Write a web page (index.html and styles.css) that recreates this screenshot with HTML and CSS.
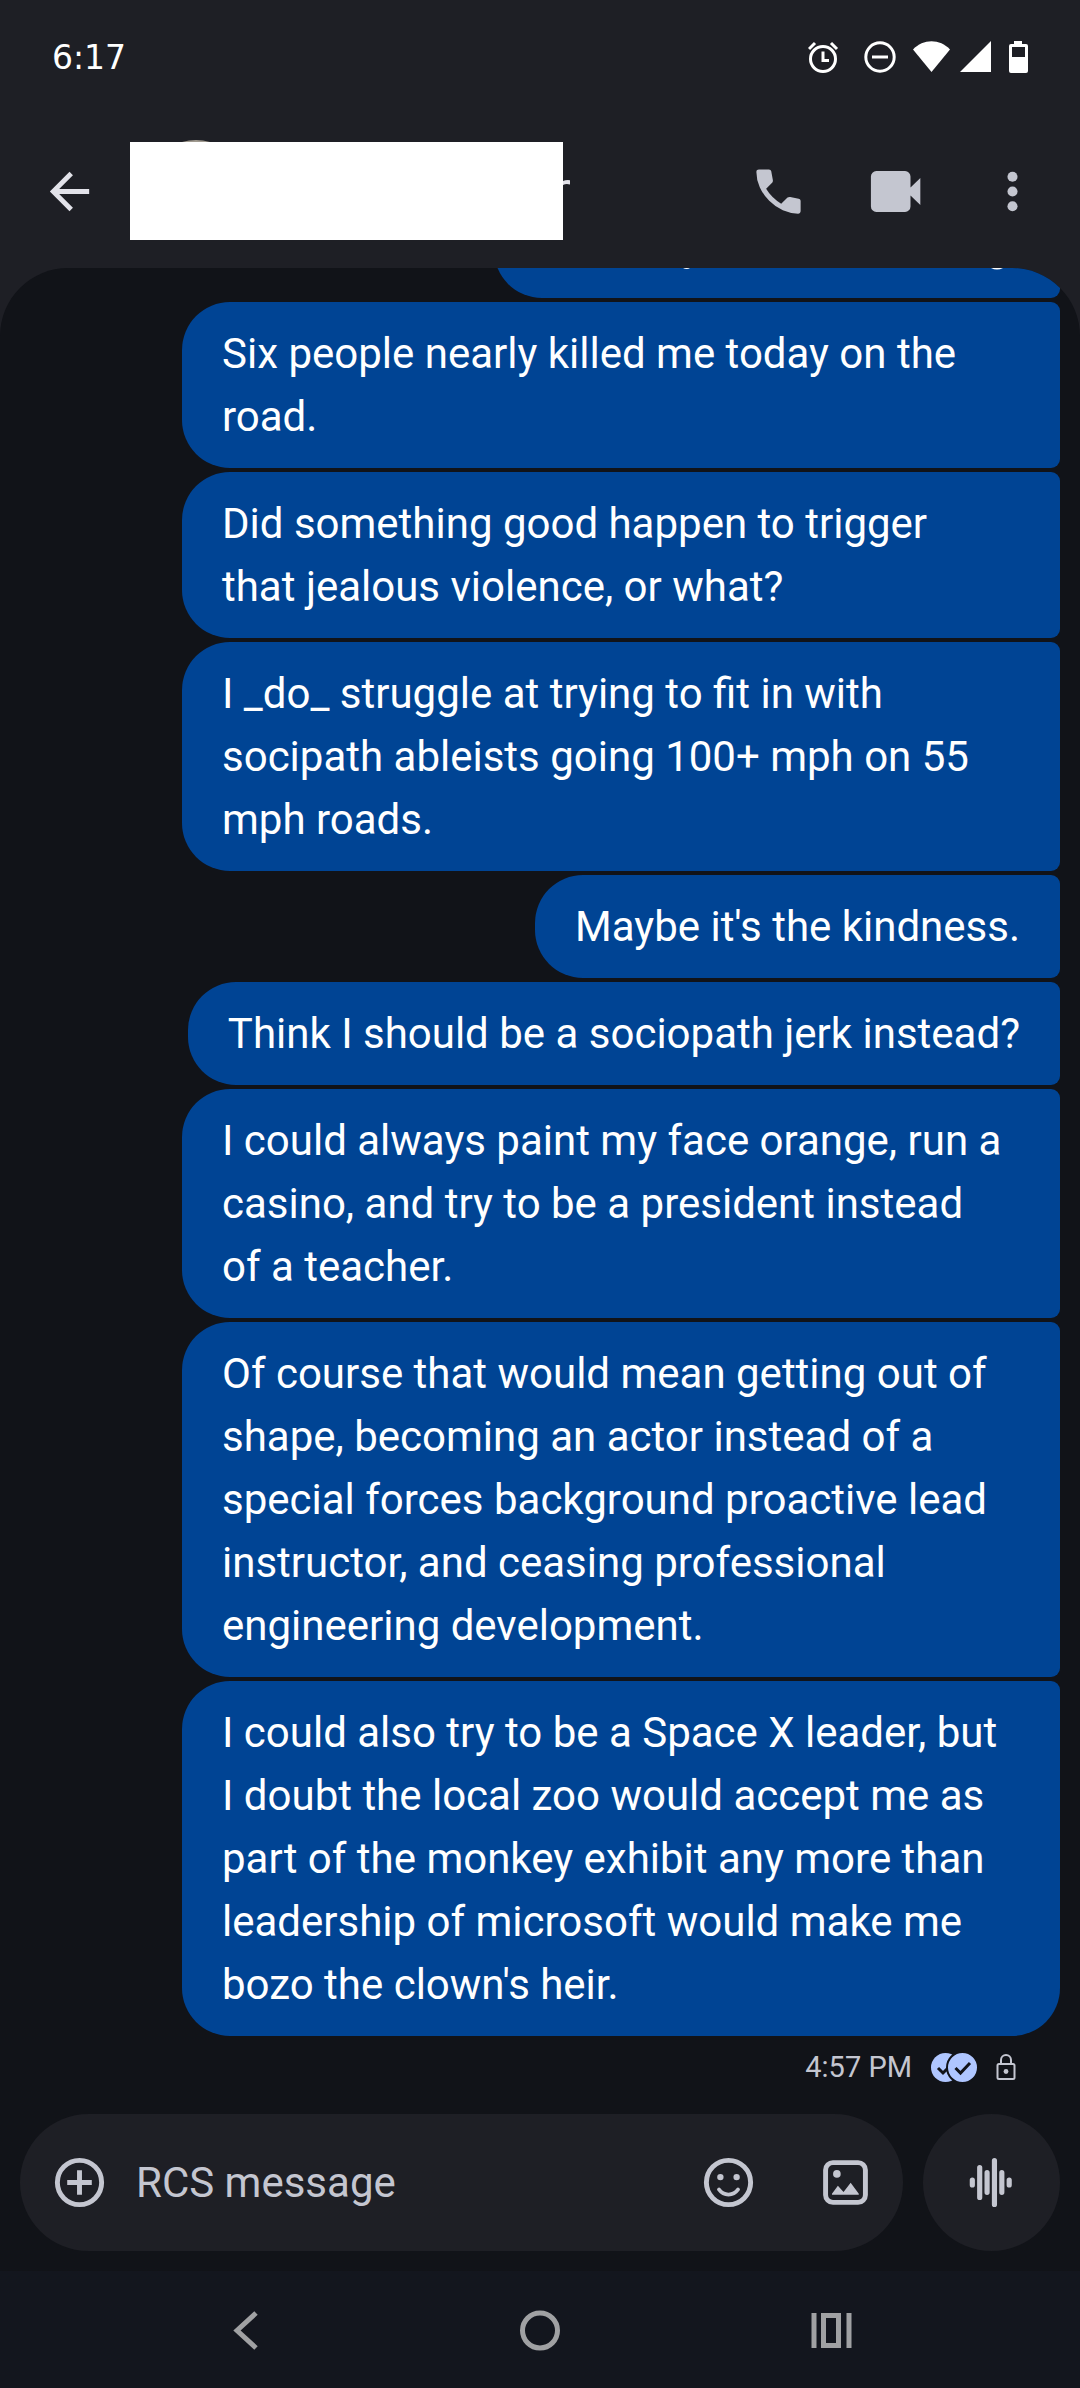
FILE: index.html
```html
<!DOCTYPE html>
<html lang="en">
<head>
<meta charset="utf-8">
<meta name="viewport" content="width=device-width, initial-scale=1">
<title>Messages</title>
<link rel="stylesheet" href="styles.css">
</head>
<body>
<div class="status-bar">
  <span class="clock">6:17</span>
  <svg class="status-icons" viewBox="0 0 220 32" aria-hidden="true">
    <g fill="none" stroke="#fff" stroke-width="3">
      <circle cx="15" cy="18" r="12.5"/>
      <path d="M1 8l6-6M29 8l-6-6M15 10.500v9h6"/>
      <circle cx="72" cy="16" r="14.200"/>
      <path d="M64 16h16"/>
    </g>
    <g fill="#fff">
      <path d="M105 8.500C115-2.500 132-2.500 142 8.500L123.500 31z"/>
      <path d="M152 31L183 0v31z"/>
      <path fill-rule="evenodd" d="M206 0h8v3h4a2 2 0 0 1 2 2v25a2 2 0 0 1-2 2h-15a2 2 0 0 1-2-2V5a2 2 0 0 1 2-2h3zM204 6v10h13V6z"/>
    </g>
  </svg>
</div>
<header class="app-bar">
  <button class="icon-button back" aria-label="Back">
    <svg viewBox="0 0 24 24"><path fill="currentColor" d="M20 11H7.800l5.600-5.600L12 4l-8 8 8 8 1.400-1.400L7.800 13H20z"/></svg>
  </button>
  <div class="contact">
    <svg class="avatar-edge" viewBox="0 0 28 2" aria-hidden="true"><path fill="#a09a8f" d="M0 2Q14-2 28 2z"/></svg>
    <svg class="name-edge" viewBox="0 0 7 5" aria-hidden="true"><path fill="#e2e2e9" d="M0 1Q3-.3 7 .2V4.500Q3 3.500 0 5z"/></svg>
  </div>
  <div class="actions">
    <button class="icon-button" aria-label="Call">
      <svg viewBox="0 0 24 24"><path fill="currentColor" d="M19.950 21q-3.125 0-6.187-1.350-3.063-1.350-5.538-3.850-2.475-2.475-3.850-5.537Q3 7.200 3 4.050q0-.45.3-.75t.75-.3H8.100q.35 0 .625.225t.325.575l.65 3.500q.05.375-.025.663-.075.287-.275.487L6.975 10.900q1.050 1.800 2.638 3.375Q11.200 15.850 13.100 17l2.350-2.350q.225-.225.588-.338.362-.112.712-.062l3.450.7q.35.075.575.338.225.262.225.612v4.050q0 .45-.3.750t-.75.300z"/></svg>
    </button>
    <button class="icon-button" aria-label="Video call">
      <svg viewBox="0 0 24 24"><path fill="currentColor" d="M4.200 3.700h11.700a2.200 2.200 0 0 1 2.200 2.200v4.500l4-3.900v11l-4-3.900v4.500a2.200 2.200 0 0 1-2.200 2.200H4.200A2.200 2.200 0 0 1 2 18.100V5.900a2.200 2.200 0 0 1 2.200-2.200z"/></svg>
    </button>
    <button class="icon-button" aria-label="More options">
      <svg viewBox="0 0 24 24" fill="currentColor"><circle cx="12" cy="6" r="2.050"/><circle cx="12" cy="12" r="2.050"/><circle cx="12" cy="18" r="2.050"/></svg>
    </button>
  </div>
</header>
<main class="chat">
  <div class="bubble earlier"><svg viewBox="0 0 566 103" aria-hidden="true"><path fill="#fff" d="M189 73h7q-3 2-7 0zM497 73h12q-6 3-12 0z"/></svg></div>
  <p class="bubble">Six people nearly killed me today on the<br>road.</p>
  <p class="bubble">Did something good happen to trigger<br>that jealous violence, or what?</p>
  <p class="bubble">I _do_ struggle at trying to fit in with<br>socipath ableists going 100+ mph on 55<br>mph roads.</p>
  <p class="bubble short">Maybe it's the kindness.</p>
  <p class="bubble short">Think I should be a sociopath jerk instead?</p>
  <p class="bubble">I could always paint my face orange, run a<br>casino, and try to be a president instead<br>of a teacher.</p>
  <p class="bubble">Of course that would mean getting out of<br>shape, becoming an actor instead of a<br>special forces background proactive lead<br>instructor, and ceasing professional<br>engineering development.</p>
  <p class="bubble last">I could also try to be a Space X leader, but<br>I doubt the local zoo would accept me as<br>part of the monkey exhibit any more than<br>leadership of microsoft would make me<br>bozo the clown's heir.</p>
  <div class="receipt">
    <span>4:57 PM</span>
    <svg class="read" viewBox="0 0 46 29" role="img" aria-label="Read">
      <circle cx="14.500" cy="14.500" r="14.500" fill="#afc6ff"/>
      <path d="M7 15l5 5 9-9" fill="none" stroke="#111318" stroke-width="3"/>
      <circle cx="31.500" cy="14.500" r="15.500" fill="#afc6ff" stroke="#111318" stroke-width="2"/>
      <path d="M24.500 15l5 5 9.500-10" fill="none" stroke="#111318" stroke-width="3"/>
    </svg>
    <svg class="lock" viewBox="0 0 20 26" role="img" aria-label="Encrypted">
      <g fill="none" stroke="#c4c6d0" stroke-width="2"><rect x="1.500" y="10" width="17" height="15" rx="1.500"/><path d="M5 10V6a5 5 0 0 1 10 0v4"/></g>
      <circle cx="10" cy="17.500" r="2.400" fill="#c4c6d0"/>
    </svg>
  </div>
</main>
<form class="composer">
  <div class="field">
    <button type="button" class="icon-button" aria-label="Attach">
      <svg viewBox="0 0 24 24" fill="none" stroke="currentColor" stroke-width="2"><circle cx="12" cy="12" r="9"/><path d="M12 7v10M7 12h10"/></svg>
    </button>
    <input type="text" aria-label="RCS message" placeholder="RCS message">
    <div class="actions">
      <button type="button" class="icon-button" aria-label="Emoji">
        <svg viewBox="0 0 24 24"><g fill="none" stroke="currentColor"><circle cx="12" cy="12" r="9" stroke-width="2"/><path stroke-width="1.500" stroke-linecap="round" d="M8.100 14.800q1.500 2.100 3.900 2.100t3.900-2.100"/></g><circle cx="8.700" cy="9.800" r="1.300" fill="currentColor"/><circle cx="15.300" cy="9.800" r="1.300" fill="currentColor"/></svg>
      </button>
      <button type="button" class="icon-button" aria-label="Gallery">
        <svg viewBox="0 0 24 24"><rect x="3.900" y="3.900" width="16.200" height="16.200" rx="3" fill="none" stroke="currentColor" stroke-width="2"/><g fill="currentColor"><circle cx="8.500" cy="8.500" r="1.550"/><path d="M6.500 17v-.4l2.400-3.300 2.300 2.600 2.900-3.800 3.300 4.500v.4z"/></g></svg>
      </button>
    </div>
  </div>
  <button type="button" class="voice icon-button" aria-label="Voice message">
    <svg viewBox="0 0 24 24" fill="none" stroke="currentColor" stroke-width="2.100" stroke-linecap="round"><path d="M4.200 11v2M7.200 5.900v12.200M10.200 8v8M13.200 3.050v17.900M16.200 8v8M19.200 11v2"/></svg>
  </button>
</form>
<nav class="system-nav">
  <button aria-label="Back"><svg viewBox="0 0 60 60"><path d="M38 13L19 30.500 38 48"/></svg></button>
  <button aria-label="Home"><svg viewBox="0 0 60 60"><circle cx="30" cy="30.500" r="17.500"/></svg></button>
  <button aria-label="Recent apps"><svg viewBox="0 0 60 60"><path d="M12 13v35M47 13v35M21.500 15.500h15v30h-15z"/></svg></button>
</nav>
</body>
</html>
```
FILE: styles.css
```css
* {
  box-sizing: border-box;
}

body {
  margin: 0;
  height: 100vh;
  display: flex;
  flex-direction: column;
  background: #1e1f25;
  color: #fff;
  font-family: Roboto, "Liberation Sans", sans-serif;
  font-size: 42px;
}

button {
  padding: 0;
  border: 0;
  background: none;
  color: inherit;
}

svg {
  display: block;
}

/* Status bar */
.status-bar {
  flex: none;
  height: 114px;
  padding: 0 52px;
  display: flex;
  align-items: center;
  justify-content: space-between;
}

.clock {
  font-family: "DejaVu Sans", sans-serif;
  font-size: 33px;
}

.status-icons {
  width: 220px;
  height: 32px;
}

/* App bar */
.app-bar {
  flex: none;
  height: 154px;
  padding: 0 38px 0 40px;
  display: flex;
  align-items: center;
  color: #c4c6d0;
}

.icon-button {
  flex: none;
}

.icon-button svg {
  width: 59px;
  height: 59px;
}

.back {
  color: #e2e2e9;
}

.contact {
  position: relative;
  width: 433px;
  height: 98px;
  margin-left: 31px;
  background: #fff;
}

.avatar-edge {
  position: absolute;
  left: 52px;
  bottom: 100%;
  width: 28px;
  height: 2px;
}

.name-edge {
  position: absolute;
  left: 100%;
  top: 38px;
  width: 7px;
  height: 5px;
}

.actions {
  display: flex;
  gap: 58px;
  margin-left: auto;
}

/* Conversation */
.chat {
  flex: 1;
  min-height: 0;
  padding: 0 20px;
  display: flex;
  flex-direction: column;
  justify-content: flex-end;
  align-items: flex-end;
  gap: 4px;
  overflow: hidden;
  background: #111318;
  border-radius: 68px 68px 0 0;
}

.bubble {
  flex: none;
  width: 878px;
  max-width: 100%;
  margin: 0;
  padding: 20px 40px;
  background: #004494;
  border-radius: 48px 9px 9px 48px;
  line-height: 63px;
}

.short {
  width: auto;
}

.earlier {
  width: 566px;
  padding: 0;
}

.last {
  border-bottom-right-radius: 48px;
}

.receipt {
  flex: none;
  height: 54px;
  padding-right: 44px;
  display: flex;
  align-items: center;
  gap: 19px;
  color: #c4c6d0;
  font-size: 29px;
}

.read {
  width: 46px;
  height: 29px;
}

.lock {
  width: 20px;
  height: 26px;
}

/* Composer */
.composer {
  flex: none;
  padding: 20px;
  display: flex;
  gap: 20px;
  background: #111318;
  color: #c4c6d0;
}

.field {
  flex: 1;
  min-width: 0;
  height: 137px;
  padding: 0 28px 0 30px;
  display: flex;
  align-items: center;
  gap: 27px;
  background: #1e1f25;
  border-radius: 69px;
}

.field input {
  flex: 1;
  min-width: 0;
  padding: 0;
  border: 0;
  outline: 0;
  background: none;
  color: #fff;
  font: inherit;
}

.field input::placeholder {
  color: #c4c6d0;
  opacity: 1;
}

.voice {
  width: 137px;
  height: 137px;
  display: grid;
  place-items: center;
  background: #1e1f25;
  border-radius: 50%;
}

/* System navigation */
.system-nav {
  flex: none;
  height: 117px;
  display: flex;
  justify-content: center;
  align-items: center;
  gap: 232px;
  background: #13161e;
}

.system-nav svg {
  width: 60px;
  height: 60px;
  fill: none;
  stroke: #a0a1a3;
  stroke-width: 5;
}
```
